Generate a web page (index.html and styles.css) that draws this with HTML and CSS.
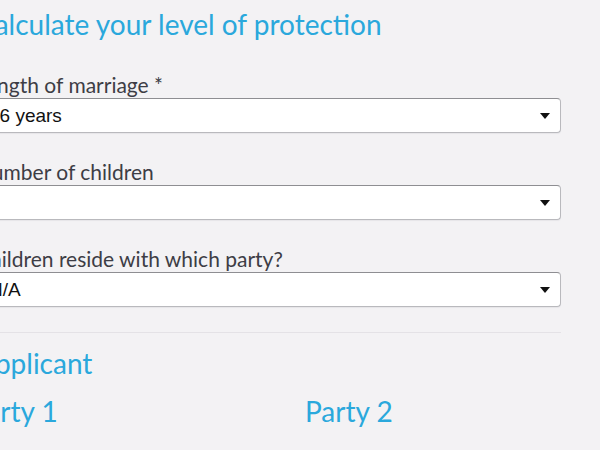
FILE: index.html
```html
<!DOCTYPE html>
<html lang="en">
<head>
    <meta charset="UTF-8">
    <meta name="viewport" content="width=device-width, initial-scale=1.0">
    <title>Protection calculator</title>
    <link rel="stylesheet" href="styles.css">
</head>
<body>
    <div class="page">
        <section class="calc">
            <h2 class="title">Calculate your level of protection</h2>

            <div class="field">
                <label class="field-label">Length of marriage *</label>
                <div class="select">
                    <span class="select-value">16 years</span>
                    <svg class="caret" width="10" height="6" viewBox="0 0 10 6"><path d="M0 0h10L5 6z" fill="#111"/></svg>
                </div>
            </div>

            <div class="field">
                <label class="field-label">Number of children</label>
                <div class="select">
                    <span class="select-value"></span>
                    <svg class="caret" width="10" height="6" viewBox="0 0 10 6"><path d="M0 0h10L5 6z" fill="#111"/></svg>
                </div>
            </div>

            <div class="field">
                <label class="field-label">Children reside with which party?</label>
                <div class="select">
                    <span class="select-value">N/A</span>
                    <svg class="caret" width="10" height="6" viewBox="0 0 10 6"><path d="M0 0h10L5 6z" fill="#111"/></svg>
                </div>
            </div>
        </section>

        <!-- Applicant -->
        <section class="applicant">
            <h3 class="section-title">Applicant</h3>
            <div class="parties">
                <h4 class="party">Party 1</h4>
                <h4 class="party">Party 2</h4>
            </div>
        </section>
    </div>
</body>
</html>
```

FILE: styles.css
```css
body {
    margin: 0;
    background-color: #f3f2f4;
    font-family: Lato, "Open Sans", sans-serif;
    overflow: hidden;
}
.page {
    margin-left: -24px;
    width: 585px;
}
.calc {
    padding: 5px 0 25px;
    border-bottom: 1px solid #e4e2e6;
}
.title {
    margin: 0 0 30px;
    font-size: 28px;
    line-height: 38px;
    font-weight: 400;
    color: #2aa8dc;
}
.field {
    margin-bottom: 27px;
}
.field:last-child {
    margin-bottom: 0;
}
.field-label {
    display: block;
    font-size: 21px;
    line-height: 24px;
    color: #3d3d45;
    margin-bottom: 1px;
}
.select {
    height: 33px;
    display: flex;
    align-items: center;
    justify-content: space-between;
    padding: 0 10px 0 12px;
    background-color: #fff;
    border: 1px solid #b9b9bd;
    border-top-color: #8e8e92;
    border-radius: 4px;
    box-shadow: 0 1px 1px #e6e5e8;
}
.select-value {
    font-family: "Liberation Sans", Arial, sans-serif;
    font-size: 19px;
    color: #111;
}
.applicant {
    padding-top: 10px;
}
.section-title {
    margin: 0;
    font-size: 28px;
    line-height: 40px;
    font-weight: 400;
    color: #2aa8dc;
}
.parties {
    display: grid;
    grid-template-columns: 335px 1fr;
    margin: 8px 0 0 -6px;
}
.party {
    margin: 0;
    font-size: 28px;
    line-height: 40px;
    font-weight: 400;
    color: #2aa8dc;
}
```
